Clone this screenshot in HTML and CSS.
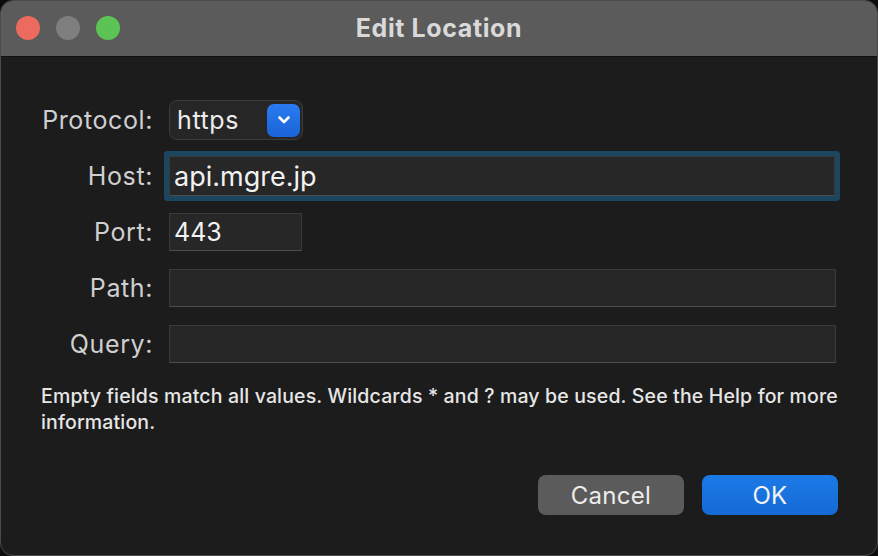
FILE: index.html
```html
<!DOCTYPE html>
<html lang="en">
<head>
    <meta charset="UTF-8">
    <meta name="viewport" content="width=device-width, initial-scale=1.0">
    <title>Edit Location</title>
    <link rel="stylesheet" href="styles.css">
</head>
<body>
    <div class="window">
        <!-- Title bar -->
        <div class="titlebar">
            <div class="lights">
                <span class="light red"></span>
                <span class="light gray"></span>
                <span class="light green"></span>
            </div>
            <div class="title">Edit Location</div>
        </div>

        <div class="content">
            <div class="form">
                <label class="label">Protocol:</label>
                <div class="popup">
                    <span class="popup-value">https</span>
                    <span class="popup-arrow">
                        <svg width="14" height="10" viewBox="0 0 14 10"><path d="M2.5 2.5 L7 7 L11.5 2.5" fill="none" stroke="#fff" stroke-width="2.6" stroke-linecap="round" stroke-linejoin="round"/></svg>
                    </span>
                </div>

                <label class="label">Host:</label>
                <div class="field wide focused">api.mgre.jp</div>

                <label class="label">Port:</label>
                <div class="field short">443</div>

                <label class="label">Path:</label>
                <div class="field wide"></div>

                <label class="label">Query:</label>
                <div class="field wide"></div>
            </div>

            <p class="help">Empty fields match all values. Wildcards * and ? may be used. See the Help for more information.</p>

            <div class="buttons">
                <button class="btn cancel">Cancel</button>
                <button class="btn ok">OK</button>
            </div>
        </div>
    </div>
</body>
</html>
```

FILE: styles.css
```css
body {
    margin: 0;
    padding: 0;
    background-color: #0c0c0c;
    font-family: Inter, "Noto Sans", sans-serif;
    width: 878px;
    height: 556px;
    overflow: hidden;
}

.window {
    box-sizing: border-box;
    width: 878px;
    height: 556px;
    border: 1px solid #4a4a4a;
    border-radius: 13px;
    background-color: #1c1c1c;
    overflow: hidden;
    display: flex;
    flex-direction: column;
}

.titlebar {
    height: 55px;
    flex-shrink: 0;
    background-color: #5b5b5b;
    border-bottom: 1px solid #101010;
    display: flex;
    align-items: center;
    justify-content: center;
    position: relative;
}

.lights {
    position: absolute;
    left: 15px;
    top: 15px;
    display: flex;
    gap: 16px;
}

.light {
    width: 24px;
    height: 24px;
    border-radius: 50%;
}

.red { background-color: #ec6a5e; }
.gray { background-color: #7f7f7f; }
.green { background-color: #5dc354; }

.title {
    color: #d9d9d9;
    font-size: 25px;
    font-weight: 700;
    letter-spacing: 0.6px;
    margin-top: -2px;
}

.content {
    padding: 44px 0 0 0;
}

.form {
    display: grid;
    grid-template-columns: 152px 667px;
    grid-auto-rows: 38px;
    column-gap: 16px;
    row-gap: 18px;
    align-items: center;
}

.label {
    text-align: right;
    color: #cfcfcf;
    font-size: 25px;
    letter-spacing: 0.6px;
}

.popup {
    box-sizing: border-box;
    width: 134px;
    height: 40px;
    border: 1px solid #3c3c3c;
    border-radius: 8px;
    background-color: #262626;
    display: flex;
    align-items: center;
    justify-content: space-between;
    padding: 0 2px 0 7px;
}

.popup-value {
    color: #ececec;
    font-size: 25px;
    letter-spacing: 0.6px;
}

.popup-arrow {
    width: 33px;
    height: 33px;
    border-radius: 7px;
    background: linear-gradient(#2a7bf0, #1a63d8);
    display: flex;
    align-items: center;
    justify-content: center;
}

.field {
    box-sizing: border-box;
    height: 38px;
    background-color: #272727;
    border: 1px solid #3a3a3a;
    border-bottom-color: #4c4c4c;
    color: #f2f2f2;
    font-size: 25px;
    padding-left: 4px;
    display: flex;
    align-items: center;
}

.field.wide {
    width: 667px;
}

.field.short {
    width: 133px;
}

.field.focused {
    height: 40px;
    width: 666px;
    font-size: 27px;
    box-shadow: 0 0 0 5px #1b4660;
    border-radius: 1px;
}

.help {
    margin: 20px 0 0 40px;
    color: #e6e6e6;
    font-size: 19.5px;
    font-weight: 500;
    letter-spacing: 0.15px;
    line-height: 26px;
    width: 810px;
}

.buttons {
    display: flex;
    justify-content: flex-end;
    gap: 18px;
    margin-top: 40px;
    margin-right: 39px;
}

.btn {
    height: 40px;
    border: none;
    border-radius: 8px;
    font-family: Inter, "Noto Sans", sans-serif;
    font-size: 24px;
    letter-spacing: 0.3px;
    color: #ececec;
    cursor: pointer;
}

.cancel {
    width: 146px;
    background-color: #5b5b5b;
}

.ok {
    width: 136px;
    background: linear-gradient(#1b7ae6, #156ad6);
    color: #f4f4f4;
}
```
